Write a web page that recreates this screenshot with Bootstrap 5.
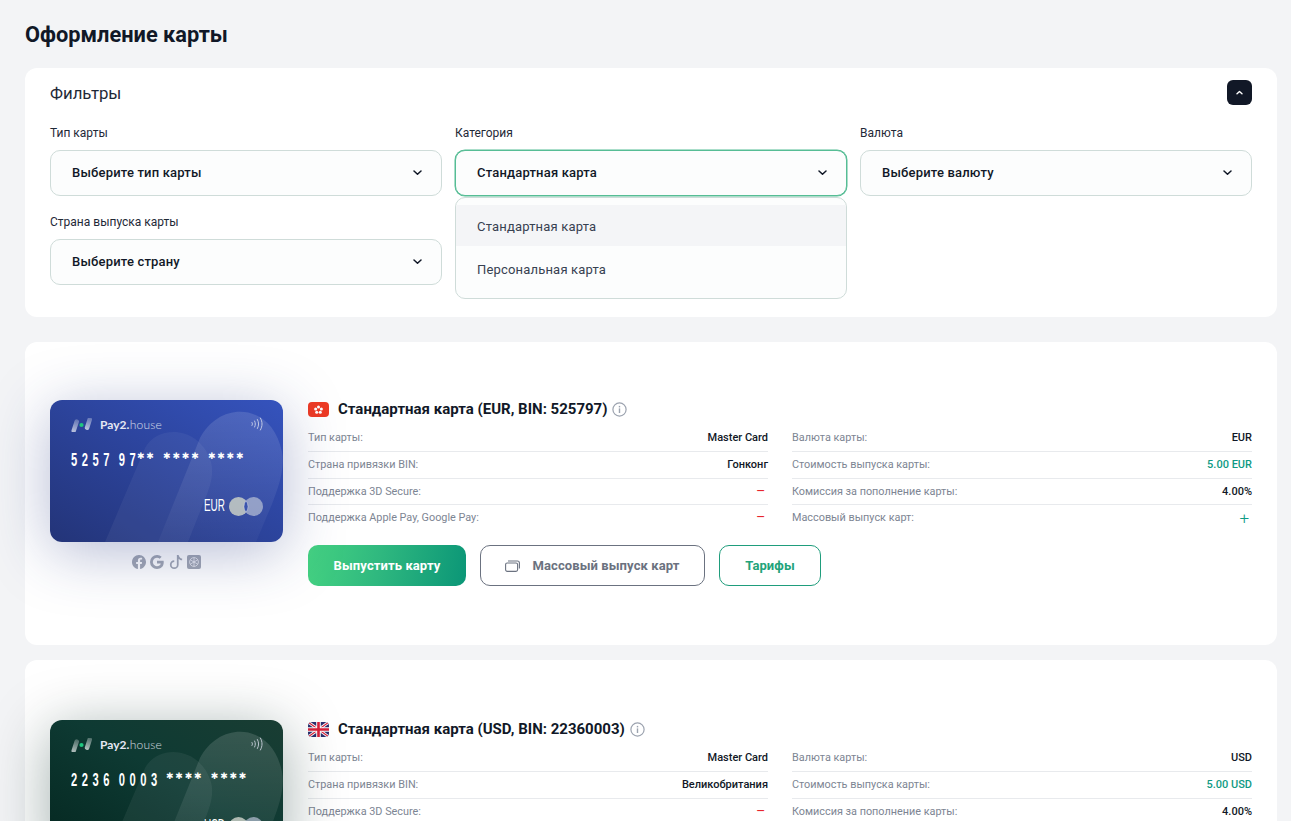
<!DOCTYPE html>
<html lang="ru">
<head>
<meta charset="utf-8">
<title>Оформление карты</title>
<link href="https://cdn.jsdelivr.net/npm/bootstrap@5.3.0/dist/css/bootstrap.min.css" rel="stylesheet">
<style>
html,body{height:821px;overflow:hidden}
body{background:#f3f4f6;font-family:Roboto,"Liberation Sans",sans-serif;color:#111827}
.pg{padding:0 14px 0 25px}
.pg-title{font-size:21.8px;font-weight:700;line-height:26px;margin:0;padding:22px 0 20px}
.panel{border:0;border-radius:12px;background:#fff}
.filter-panel{padding:12px 25px 32px;margin-bottom:25px}
.filter-head{height:25px;margin-bottom:20px}
.filter-name{font-size:16.8px;font-weight:400;line-height:25px;margin:0;padding-top:1px;color:#1f2937}
.collapse-btn{width:25px;height:25px;padding:0;border:0;border-radius:6px;background:#111827}
.filter-grid{display:grid;grid-template-columns:repeat(3,392px);column-gap:13px;row-gap:18px}
.fld-label{display:block;font-size:12px;line-height:14px;margin:0 0 10px;padding-top:1px;color:#1f2937}
.sel{height:46px;padding:0 19px 0 21px;border:1px solid #cfdcd9;border-radius:10px;background:#fcfdfd;font-size:13px;font-weight:500;letter-spacing:.18px;color:#111827;width:100%}
.sel.open{border-color:#56bd95;box-shadow:0 0 0 .5px #56bd95}
.sel-wrap{position:relative}
.sel-menu.dropdown-menu{left:0;top:47px;width:392px;min-width:0;padding:7px 0 7px;background:#fcfdfd;border:1px solid #cfdcd9;border-radius:10px;display:block}
.sel-menu .dropdown-item{height:41px;line-height:43px;padding:0 21px;font-size:13px;letter-spacing:.18px;color:#374151}
.sel-menu .dropdown-item.cur{background:#f4f5f7}
.sel-menu .dropdown-item+.dropdown-item{height:45px;line-height:47px}
.offer{padding:58px 25px 59px;margin-bottom:15px}
.offer+.offer{padding-top:60px}
.offer-body{gap:25px}
.vis-col{width:233px;flex:none}
.bank{position:relative;overflow:hidden;width:233px;height:142px;border-radius:12px;color:#fff;padding:16px 20px 0 21px}
.bank.blue{background:linear-gradient(32deg,#233478 0%,#2d459f 55%,#3553bd 100%);box-shadow:0 10px 60px rgba(38,56,130,.34)}
.bank.green{background:linear-gradient(32deg,#04261f 0%,#0e3a33 55%,#193d33 100%);box-shadow:0 10px 60px rgba(5,40,35,.38)}
.bank-art{position:absolute;left:0;top:0;width:233px;height:142px}
.bank-in{position:relative}
.brand{font-family:Lato,Roboto,sans-serif;font-size:12px;line-height:14px;height:18px;gap:8px;color:#e5e8f3}
.brand b{font-weight:700}
.brand span{font-weight:300;opacity:.9;letter-spacing:.2px;margin-left:.5px}
.nfc{margin-left:auto;margin-right:-1px;margin-top:-2px}
.pan{display:flex;align-items:center;font-family:"Liberation Sans",sans-serif;font-weight:700;font-size:18px;line-height:20px;margin-top:16px;white-space:pre}
.pan-d{display:inline-block;flex:none;letter-spacing:7.3px;word-spacing:-4.5px;transform:scaleX(.62);transform-origin:left center}
.pan-d.six{width:66px}
.pan-d.eight{width:95px}
.pan i{font-style:normal;font-family:"DejaVu Sans",sans-serif;font-weight:700;font-size:9px;letter-spacing:1.8px;word-spacing:2.5px;position:relative;top:-4px}
.bank-cur{position:absolute;right:20px;top:96px;gap:5px;font-family:"Liberation Sans",sans-serif;font-size:16px;line-height:20px}
.bank-cur span{display:inline-block;width:20px;transform:scaleX(.62);transform-origin:left center;white-space:nowrap}
.soc{gap:4.5px;margin-top:13px;height:14px}
.info-col{min-width:0;flex:1}
.offer-title{font-size:15px;font-weight:700;line-height:18px;margin:0 0 7px;gap:9px;color:#111827}
.info-i{margin-left:-4px}
.info-grid{display:grid;grid-template-columns:460px 460px;column-gap:24px}
.spec{height:26.75px;font-size:10.85px;line-height:26px;color:#7d8593;border-bottom:1px solid #e8eaed}
.spec:last-child{border-bottom:0}
.spec strong{font-size:11px;font-weight:500;color:#111827}
.spec .money{font-size:11px;font-weight:500;color:#0f9a84}
.spec .no{color:#e8252d;font-size:10.5px;font-weight:500;padding-right:3.5px}
.spec .yes{color:#0f9a84;font-size:17px;line-height:27px;font-weight:300;padding-right:3px}
.act{gap:14px;margin-top:13px}
.act .btn{height:41px;border-radius:10px;font-size:13px;font-weight:700;letter-spacing:.1px;padding:0;display:flex;align-items:center;justify-content:center}
.go{width:158px;border:0;color:#fff;background:linear-gradient(100deg,#45d382 0%,#2fb87f 45%,#0b9677 100%)}
.act .btn.go:hover{color:#fff}
.bulk{width:225px;border:1px solid #6b7280;color:#6b7280;gap:12px;background:#fff}
.tariff{width:102px;border:1px solid #1f9d7c;color:#22a37a;background:#fff}
</style>
</head>
<body>
<main class="pg">
<h1 class="pg-title">Оформление карты</h1>

<section class="card panel filter-panel">
  <div class="d-flex justify-content-between align-items-center filter-head">
    <h2 class="filter-name">Фильтры</h2>
    <button class="collapse-btn d-flex align-items-center justify-content-center" type="button" aria-label="Свернуть">
      <svg width="7" height="5" viewBox="0 0 7 5"><path d="M1 3.8l2.5-2.3L6 3.8" fill="none" stroke="#fff" stroke-width="1.4" stroke-linecap="round" stroke-linejoin="round"/></svg>
    </button>
  </div>
  <div class="filter-grid">
    <div>
      <label class="fld-label">Тип карты</label>
      <div class="sel d-flex align-items-center justify-content-between"><span>Выберите тип карты</span><svg width="9" height="6" viewBox="0 0 9 6"><path d="M1 1l3.5 3.3L8 1" fill="none" stroke="#111827" stroke-width="1.5" stroke-linecap="round" stroke-linejoin="round"/></svg></div>
    </div>
    <div>
      <label class="fld-label">Категория</label>
      <div class="sel-wrap">
        <div class="sel open d-flex align-items-center justify-content-between"><span>Стандартная карта</span><svg width="9" height="6" viewBox="0 0 9 6"><path d="M1 1l3.5 3.3L8 1" fill="none" stroke="#111827" stroke-width="1.5" stroke-linecap="round" stroke-linejoin="round"/></svg></div>
        <div class="dropdown-menu sel-menu show">
          <a class="dropdown-item cur" href="#">Стандартная карта</a>
          <a class="dropdown-item" href="#">Персональная карта</a>
        </div>
      </div>
    </div>
    <div>
      <label class="fld-label">Валюта</label>
      <div class="sel d-flex align-items-center justify-content-between"><span>Выберите валюту</span><svg width="9" height="6" viewBox="0 0 9 6"><path d="M1 1l3.5 3.3L8 1" fill="none" stroke="#111827" stroke-width="1.5" stroke-linecap="round" stroke-linejoin="round"/></svg></div>
    </div>
    <div>
      <label class="fld-label">Страна выпуска карты</label>
      <div class="sel d-flex align-items-center justify-content-between"><span>Выберите страну</span><svg width="9" height="6" viewBox="0 0 9 6"><path d="M1 1l3.5 3.3L8 1" fill="none" stroke="#111827" stroke-width="1.5" stroke-linecap="round" stroke-linejoin="round"/></svg></div>
    </div>
  </div>
</section>

<section class="card panel offer">
  <div class="d-flex offer-body">
    <div class="vis-col">
      <div class="bank blue">
        <svg class="bank-art" viewBox="0 0 233 142"><defs><linearGradient id="fadeA" x1="0" y1="0" x2="0" y2="1"><stop offset="0" stop-color="#fff" stop-opacity=".13"/><stop offset="1" stop-color="#fff" stop-opacity=".03"/></linearGradient></defs><path d="M55 142L95 48C108 24 150 26 161 62C165 76 158 92 153 104L138 142Z" fill="#fff" opacity=".05"/><path d="M108 142L150 38C170 0 222 2 232 52C235 70 228 88 222 104L206 142Z" fill="url(#fadeA)"/></svg>
        <div class="bank-in">
          <div class="d-flex align-items-center brand">
            <svg width="21" height="14" viewBox="0 0 21 14"><defs><linearGradient id="pillA" x1="0" y1="0" x2="0" y2="1"><stop offset="0" stop-color="#fff" stop-opacity=".25"/><stop offset="1" stop-color="#fff" stop-opacity=".7"/></linearGradient></defs><rect x="2" y="1" width="4.5" height="14" rx="2.2" transform="rotate(18 4 8)" fill="url(#pillA)"/><circle cx="10.5" cy="7" r="2.1" fill="#1fc77f"/><rect x="15" y="-1" width="4.5" height="13" rx="2.2" transform="rotate(18 17 6)" fill="url(#pillA)"/></svg>
            <div><b>Pay2.</b><span>house</span></div>
            <svg class="nfc" width="13" height="14" viewBox="0 0 13 14" fill="none" stroke="#dfe3f1" stroke-width="1" stroke-linecap="round" opacity=".8"><path d="M1 5.5c.6 1 .6 2 0 3M3.6 4c1 2 1 4 0 6M6.4 2.5c1.6 3 1.6 6 0 9M9.4 1c2.2 4 2.2 8 0 12"/></svg>
          </div>
          <div class="pan"><span class="pan-d six">5257 97</span><i>✱✱ ✱✱✱✱ ✱✱✱✱</i></div>
        </div>
        <div class="bank-cur d-flex align-items-center"><span>EUR</span>
          <svg width="34" height="19" viewBox="0 0 34 19"><circle cx="9.5" cy="9.5" r="9.5" fill="#c9cfc6" opacity=".85"/><circle cx="24.5" cy="9.5" r="9.5" fill="#b9c2d6" opacity=".7"/><path d="M17 3.6a9.5 9.5 0 0 1 0 11.8a9.5 9.5 0 0 1 0-11.8z" fill="#3b55ad" stroke="#d7dbe6" stroke-width=".5"/></svg>
        </div>
      </div>
      <div class="d-flex justify-content-center soc">
        <svg width="14" height="14" viewBox="0 0 16 16" fill="#a2a7b4"><path d="M16 8.049c0-4.446-3.582-8.05-8-8.05C3.58 0-.002 3.603-.002 8.05c0 4.017 2.926 7.347 6.75 7.951v-5.625h-2.03V8.05H6.75V6.275c0-2.017 1.195-3.131 3.022-3.131.876 0 1.791.157 1.791.157v1.98h-1.009c-.993 0-1.303.621-1.303 1.258v1.51h2.218l-.354 2.326H9.25V16c3.824-.604 6.75-3.934 6.75-7.951z"/></svg>
        <svg width="14" height="14" viewBox="0 0 16 16" fill="#a2a7b4"><path d="M15.545 6.558a9.42 9.42 0 0 1 .139 1.626c0 2.434-.87 4.492-2.384 5.885h.002C11.978 15.292 10.158 16 8 16A8 8 0 1 1 8 0a7.689 7.689 0 0 1 5.352 2.082l-2.284 2.284A4.347 4.347 0 0 0 8 3.166c-2.087 0-3.86 1.408-4.492 3.304a4.792 4.792 0 0 0 0 3.063h.003c.635 1.893 2.405 3.301 4.492 3.301 1.078 0 2.004-.276 2.722-.764h-.003a3.702 3.702 0 0 0 1.599-2.431H8v-3.08h7.545z"/></svg>
        <svg width="14" height="14" viewBox="0 0 16 16" fill="#a2a7b4"><path d="M9 0h1.98c.144.715.54 1.617 1.235 2.512C12.895 3.389 13.797 4 15 4v2c-1.753 0-3.07-.814-4-1.829V11a5 5 0 1 1-5-5v2a3 3 0 1 0 3 3V0Z"/></svg>
        <svg width="14" height="14" viewBox="0 0 14 14"><rect width="14" height="14" rx="2" fill="#a2a7b4"/><g fill="none" stroke="#e6e8ee" stroke-width=".9"><circle cx="7" cy="7" r="4.4"/><path d="M7 2.6v5.2M3.2 4.8l4.4 2.6M3.2 9.2l4.4-2.6M7 11.4V6.2M10.8 9.2L6.4 6.6M10.8 4.8L6.4 7.4"/></g></svg>
      </div>
    </div>
    <div class="info-col">
      <div class="d-flex align-items-center offer-title">
        <svg width="21" height="15" viewBox="0 0 21 15"><rect width="21" height="15" rx="4" fill="#ee3a24"/><g fill="#fff"><circle cx="10.5" cy="4.9" r="1.5"/><circle cx="7.6" cy="7" r="1.5"/><circle cx="13.4" cy="7" r="1.5"/><circle cx="8.7" cy="10.3" r="1.5"/><circle cx="12.3" cy="10.3" r="1.5"/></g><circle cx="10.5" cy="7.8" r=".8" fill="#ee3a24"/></svg>
        <span>Стандартная карта (EUR, BIN: 525797)</span>
        <svg class="info-i" width="15" height="15" viewBox="0 0 15 15"><circle cx="7.5" cy="7.5" r="6.6" fill="none" stroke="#9ca3af" stroke-width="1.2"/><rect x="6.8" y="6.4" width="1.4" height="4.6" fill="#9ca3af"/><rect x="6.8" y="3.9" width="1.4" height="1.5" fill="#9ca3af"/></svg>
      </div>
      <div class="info-grid">
        <div>
          <div class="spec d-flex justify-content-between"><span>Тип карты:</span><strong>Master Card</strong></div>
          <div class="spec d-flex justify-content-between"><span>Страна привязки BIN:</span><strong>Гонконг</strong></div>
          <div class="spec d-flex justify-content-between"><span>Поддержка 3D Secure:</span><span class="no">—</span></div>
          <div class="spec d-flex justify-content-between"><span>Поддержка Apple Pay, Google Pay:</span><span class="no">—</span></div>
        </div>
        <div>
          <div class="spec d-flex justify-content-between"><span>Валюта карты:</span><strong>EUR</strong></div>
          <div class="spec d-flex justify-content-between"><span>Стоимость выпуска карты:</span><span class="money">5.00 EUR</span></div>
          <div class="spec d-flex justify-content-between"><span>Комиссия за пополнение карты:</span><strong>4.00%</strong></div>
          <div class="spec d-flex justify-content-between"><span>Массовый выпуск карт:</span><span class="yes">+</span></div>
        </div>
      </div>
      <div class="d-flex act">
        <a class="btn go" href="#">Выпустить карту</a>
        <a class="btn bulk" href="#"><svg width="15" height="12" viewBox="0 0 15 12" fill="none" stroke="#6b7280" stroke-width="1.1"><rect x=".6" y="3" width="12" height="8.4" rx="1.6"/><path d="M3 1h9.4A2 2 0 0 1 14.4 3v5.5"/></svg>Массовый выпуск карт</a>
        <a class="btn tariff" href="#">Тарифы</a>
      </div>
    </div>
  </div>
</section>

<section class="card panel offer">
  <div class="d-flex offer-body">
    <div class="vis-col">
      <div class="bank green">
        <svg class="bank-art" viewBox="0 0 233 142"><defs><linearGradient id="fadeB" x1="0" y1="0" x2="0" y2="1"><stop offset="0" stop-color="#fff" stop-opacity=".14"/><stop offset="1" stop-color="#fff" stop-opacity=".04"/></linearGradient></defs><path d="M55 142L95 48C108 24 150 26 161 62C165 76 158 92 153 104L138 142Z" fill="#fff" opacity=".06"/><path d="M108 142L150 38C170 0 222 2 232 52C235 70 228 88 222 104L206 142Z" fill="url(#fadeB)"/></svg>
        <div class="bank-in">
          <div class="d-flex align-items-center brand">
            <svg width="21" height="14" viewBox="0 0 21 14"><defs><linearGradient id="pillB" x1="0" y1="0" x2="0" y2="1"><stop offset="0" stop-color="#fff" stop-opacity=".25"/><stop offset="1" stop-color="#fff" stop-opacity=".7"/></linearGradient></defs><rect x="2" y="1" width="4.5" height="14" rx="2.2" transform="rotate(18 4 8)" fill="url(#pillB)"/><circle cx="10.5" cy="7" r="2.1" fill="#1fc77f"/><rect x="15" y="-1" width="4.5" height="13" rx="2.2" transform="rotate(18 17 6)" fill="url(#pillB)"/></svg>
            <div><b>Pay2.</b><span>house</span></div>
            <svg class="nfc" width="13" height="14" viewBox="0 0 13 14" fill="none" stroke="#dfe3f1" stroke-width="1" stroke-linecap="round" opacity=".8"><path d="M1 5.5c.6 1 .6 2 0 3M3.6 4c1 2 1 4 0 6M6.4 2.5c1.6 3 1.6 6 0 9M9.4 1c2.2 4 2.2 8 0 12"/></svg>
          </div>
          <div class="pan"><span class="pan-d eight">2236 0003</span><i>✱✱✱✱ ✱✱✱✱</i></div>
        </div>
        <div class="bank-cur d-flex align-items-center"><span>USD</span>
          <svg width="34" height="19" viewBox="0 0 34 19"><circle cx="9.5" cy="9.5" r="9.5" fill="#c9cfc6" opacity=".85"/><circle cx="24.5" cy="9.5" r="9.5" fill="#b9c2d6" opacity=".7"/><path d="M17 3.6a9.5 9.5 0 0 1 0 11.8a9.5 9.5 0 0 1 0-11.8z" fill="#1d4a44" stroke="#d7dbe6" stroke-width=".5"/></svg>
        </div>
      </div>
    </div>
    <div class="info-col">
      <div class="d-flex align-items-center offer-title">
        <svg width="21" height="15" viewBox="0 0 21 15"><defs><clipPath id="uk"><rect width="21" height="15" rx="4"/></clipPath></defs><g clip-path="url(#uk)"><rect width="21" height="15" fill="#2a2f6e"/><path d="M0 0L21 15M21 0L0 15" stroke="#fff" stroke-width="3"/><path d="M0 0L21 15M21 0L0 15" stroke="#d8203a" stroke-width="1.1"/><path d="M10.5 0V15M0 7.5H21" stroke="#fff" stroke-width="4.6"/><path d="M10.5 0V15M0 7.5H21" stroke="#d8203a" stroke-width="2.6"/></g></svg>
        <span>Стандартная карта (USD, BIN: 22360003)</span>
        <svg class="info-i" width="15" height="15" viewBox="0 0 15 15"><circle cx="7.5" cy="7.5" r="6.6" fill="none" stroke="#9ca3af" stroke-width="1.2"/><rect x="6.8" y="6.4" width="1.4" height="4.6" fill="#9ca3af"/><rect x="6.8" y="3.9" width="1.4" height="1.5" fill="#9ca3af"/></svg>
      </div>
      <div class="info-grid">
        <div>
          <div class="spec d-flex justify-content-between"><span>Тип карты:</span><strong>Master Card</strong></div>
          <div class="spec d-flex justify-content-between"><span>Страна привязки BIN:</span><strong>Великобритания</strong></div>
          <div class="spec d-flex justify-content-between"><span>Поддержка 3D Secure:</span><span class="no">—</span></div>
        </div>
        <div>
          <div class="spec d-flex justify-content-between"><span>Валюта карты:</span><strong>USD</strong></div>
          <div class="spec d-flex justify-content-between"><span>Стоимость выпуска карты:</span><span class="money">5.00 USD</span></div>
          <div class="spec d-flex justify-content-between"><span>Комиссия за пополнение карты:</span><strong>4.00%</strong></div>
        </div>
      </div>
    </div>
  </div>
</section>
</main>
<script src="https://cdn.jsdelivr.net/npm/bootstrap@5.3.0/dist/js/bootstrap.bundle.min.js"></script>
</body>
</html>
